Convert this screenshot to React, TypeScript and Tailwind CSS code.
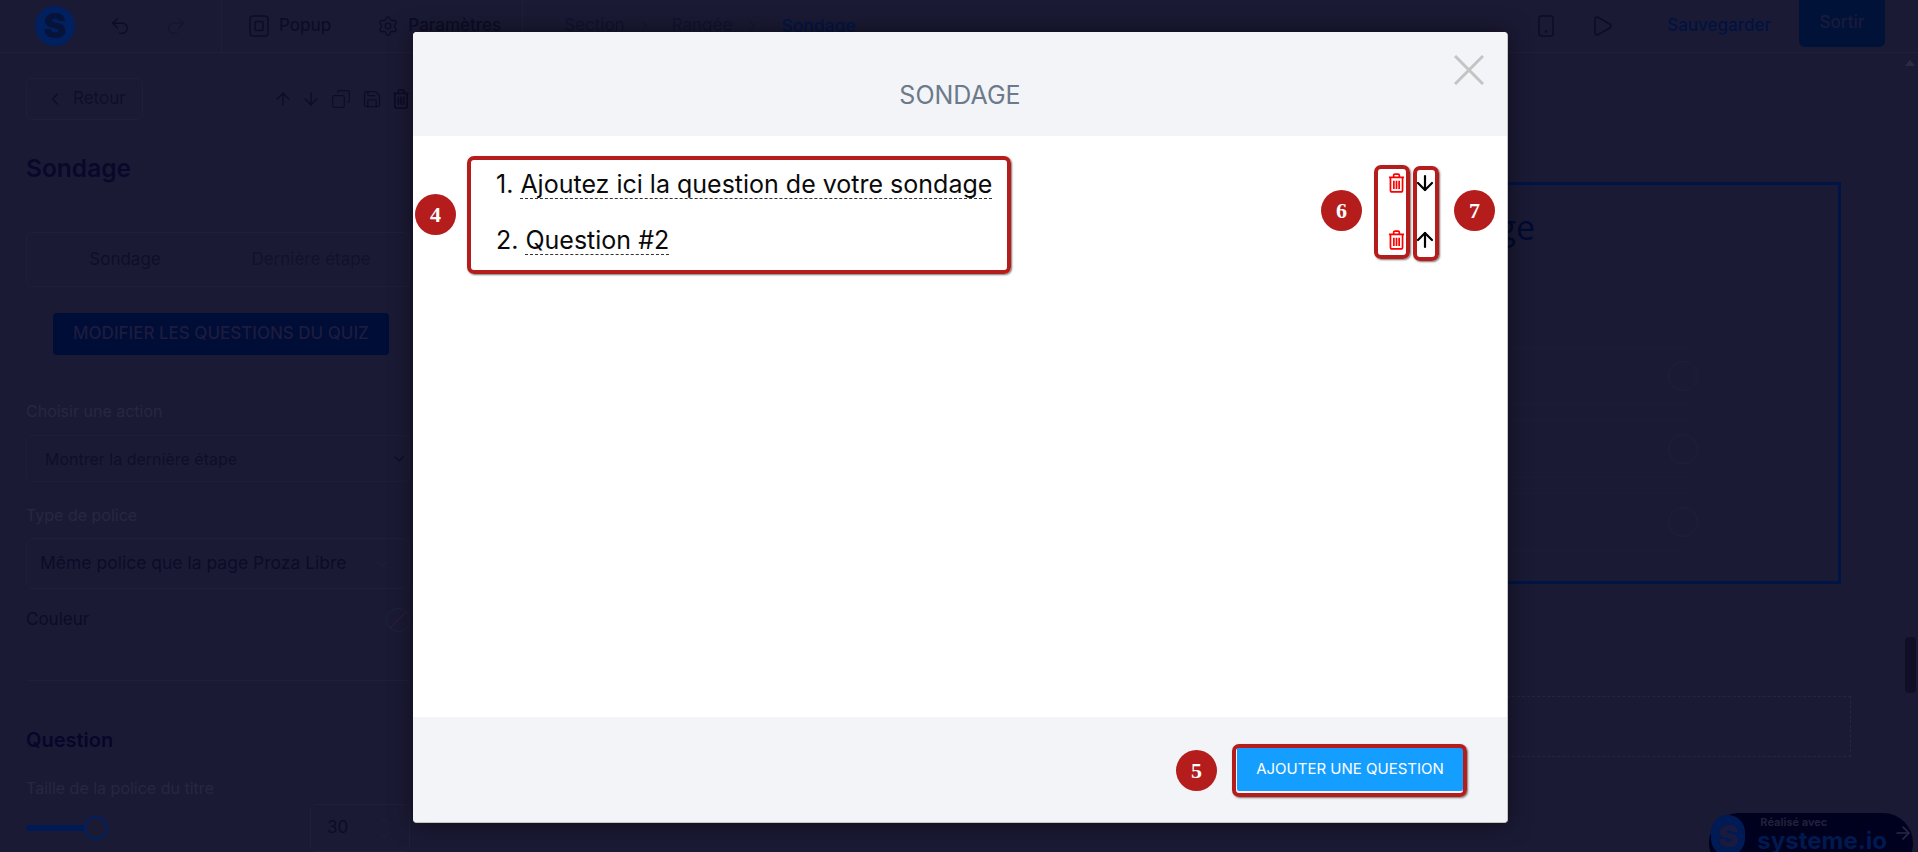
import { ArrowDown, ArrowUp, ChevronDown, ChevronLeft, ChevronRight, ChevronUp, Copy, Play, Save, Settings, Undo2, Redo2 } from "lucide-react";

function Trash({ className }: { className?: string }) {
  return (
    <svg viewBox="0 0 18 21" fill="none" stroke="currentColor" strokeWidth="1.8" className={className}>
      <path d="M1 4.5h16M6 4.2V2.4C6 1.6 6.6 1 7.4 1h3.2c.8 0 1.4.6 1.4 1.4v1.8" />
      <path d="M2.6 4.8v13.4c0 1 .8 1.8 1.8 1.8h9.2c1 0 1.8-.8 1.8-1.8V4.8" />
      <path d="M6.2 8v8.8M9 8v8.8M11.8 8v8.8" />
    </svg>
  );
}

function Marker({ n, className }: { n: number; className: string }) {
  return (
    <div className={`absolute flex h-[41px] w-[41px] items-center justify-center rounded-full bg-[#b51c1c] font-['Liberation_Serif',serif] text-[22px] font-bold text-white ${className}`}>
      {n}
    </div>
  );
}

function Question({ n, text }: { n: number; text: string }) {
  return (
    <div className="flex h-[32px] items-start gap-[7px] text-[25px] leading-[32px] text-[#0a0a0a]">
      <span>{n}.</span>
      <span className="h-[31px] border-b border-dashed border-[#333]">{text}</span>
    </div>
  );
}

function Bar() {
  return (
    <div className="flex h-[58px] w-[640px] items-center justify-end rounded-full border border-[#1d1c37] pr-[14px]">
      <div className="h-[30px] w-[30px] rounded-full border border-[#20203a]" />
    </div>
  );
}

export default function App() {
  return (
    <div className="relative flex h-screen w-full flex-col overflow-hidden bg-[#1b1a35] font-['Inter',sans-serif] text-[#0d0c28]">
      {/* Top bar */}
      <header className="flex h-[53px] shrink-0 items-center border-b border-[#201f3a] pl-[35px] pr-[33px]">
        <div className="flex h-[40px] w-[40px] items-center justify-center rounded-full bg-[#00205f] text-[34px] font-black leading-none text-[#071338]">S</div>
        <Undo2 className="ml-[34px] h-[22px] w-[22px]" strokeWidth={1.5} />
        <Redo2 className="ml-[34px] h-[22px] w-[22px] text-[#16152f]" strokeWidth={1.5} />
        <div className="ml-[34px] h-[52px] w-px bg-[#201f3a]" />
        <svg viewBox="0 0 20 22" fill="none" stroke="currentColor" strokeWidth="1.5" className="ml-[27px] h-[22px] w-[20px]">
          <rect x="1" y="1" width="18" height="20" rx="3" />
          <rect x="6" y="6.5" width="8" height="9" rx="1.5" />
        </svg>
        <span className="ml-[10px] text-[17px] font-medium">Popup</span>
        <Settings className="ml-[46px] h-[22px] w-[22px]" strokeWidth={1.5} />
        <span className="ml-[9px] text-[17px] font-medium">Paramètres</span>
        <div className="ml-[21px] h-[52px] w-px bg-[#201f3a]" />
        <span className="ml-[41px] text-[17px] text-[#131230]">Section</span>
        <ChevronRight className="ml-[9px] h-[20px] w-[20px] text-[#131230]" strokeWidth={1.2} />
        <span className="ml-[18px] text-[17px] text-[#131230]">Rangée</span>
        <ChevronRight className="ml-[10px] h-[20px] w-[20px] text-[#131230]" strokeWidth={1.2} />
        <span className="ml-[19px] text-[17.5px] font-medium text-[#001647]">Sondage</span>
        <div className="flex-1" />
        <svg viewBox="0 0 16 22" fill="none" stroke="currentColor" strokeWidth="1.5" className="h-[22px] w-[16px]">
          <rect x="1" y="1" width="14" height="20" rx="2.5" />
          <circle cx="8" cy="16.5" r="0.6" fill="currentColor" />
        </svg>
        <Play className="ml-[36px] h-[24px] w-[24px]" strokeWidth={1.5} />
        <span className="ml-[53px] text-[17px] font-medium text-[#001240]">Sauvegarder</span>
        <div className="ml-[28px] -mt-[6px] flex h-[47px] w-[86px] items-center justify-center rounded-b-[6px] bg-[#001238] text-[17px] font-medium text-[#1b1a3d]">Sortir</div>
      </header>

      <main className="flex min-h-0 flex-1">
        {/* Sidebar */}
        <aside className="w-[436px] shrink-0 px-[26px] pt-[25px]">
          <div className="flex h-[42px] items-center">
            <div className="flex h-[42px] w-[117px] items-center rounded-[6px] border border-[#201f3a] pl-[18px] text-[17px] text-[#0f0e2a]">
              <ChevronLeft className="mr-[8px] h-[20px] w-[20px]" strokeWidth={1.6} />
              Retour
            </div>
            <ArrowUp className="ml-[130px] h-[20px] w-[20px]" strokeWidth={1.6} />
            <ArrowDown className="ml-[8px] h-[20px] w-[20px]" strokeWidth={1.6} />
            <Copy className="ml-[10px] h-[20px] w-[20px] -scale-x-100" strokeWidth={1.4} />
            <Save className="ml-[11px] h-[20px] w-[20px]" strokeWidth={1.5} />
            <Trash className="ml-[10px] h-[20px] w-[18px]" />
          </div>
          <h1 className="mt-[32px] text-[24.5px] font-semibold leading-[32px] text-[#09082a]">Sondage</h1>
          <div className="mt-[48px] flex h-[55px] items-center rounded-[6px] border border-[#201f3a] text-[17px] text-[#0f0e2a]">
            <span className="w-[196px] text-center">Sondage</span>
            <span className="w-[176px] text-center text-[#12112d]">Dernière étape</span>
          </div>
          <div className="ml-[27px] mt-[26px] flex h-[42px] w-[336px] items-center justify-center rounded-[4px] bg-[#000d36] text-[17px] font-medium text-[#1d1c3f]">MODIFIER LES QUESTIONS DU QUIZ</div>
          <div className="mt-[46px] text-[16px] leading-[20px] text-[#28273f]">Choisir une action</div>
          <div className="mt-[14px] flex h-[47px] items-center justify-between rounded-[6px] border border-[#1f1e39] pl-[18px] pr-[2px] text-[16px] text-[#0f0e2a]">
            Montrer la dernière étape
            <ChevronDown className="h-[16px] w-[16px]" strokeWidth={2.4} />
          </div>
          <div className="mt-[23px] text-[16px] leading-[20px] text-[#28273f]">Type de police</div>
          <div className="mt-[13px] flex h-[51px] items-center justify-between rounded-[8px] border border-[#201f3a] pl-[13px] pr-[18px] text-[17.5px] text-[#0c0b28]">
            Même police que la page Proza Libre
            <ChevronDown className="h-[18px] w-[18px] text-[#23223d]" strokeWidth={1.4} />
          </div>
          <div className="mt-[19px] flex h-[24px] items-center justify-between text-[17px] text-[#0c0b28]">
            Couleur
            <svg viewBox="0 0 24 24" className="h-[24px] w-[24px]" fill="none">
              <circle cx="12" cy="12" r="11.5" stroke="#23223d" />
              <path d="M4 20 20 4" stroke="#3a1a3a" />
            </svg>
          </div>
          <div className="mt-[48px] h-px bg-[#201f3a]" />
          <h2 className="mt-[45px] text-[20px] font-semibold leading-[28px] text-[#07062a]">Question</h2>
          <div className="mt-[24px] text-[16px] leading-[20px] text-[#28273f]">Taille de la police du titre</div>
          <div className="mt-[6px] flex h-[48px] items-center">
            <div className="h-[6px] w-[58px] rounded-l-full bg-[#001a55]" />
            <div className="h-[24px] w-[24px] rounded-full border-2 border-[#00205f]" />
            <div className="flex-1" />
            <div className="flex h-[48px] w-[100px] items-center justify-between rounded-[6px] border border-[#201f3a] pl-[16px] pr-[18px] text-[17px] text-[#0c0b28]">
              30
              <div className="flex flex-col text-[#23223d]">
                <ChevronUp className="h-[14px] w-[14px]" strokeWidth={1.4} />
                <ChevronDown className="h-[14px] w-[14px]" strokeWidth={1.4} />
              </div>
            </div>
          </div>
        </aside>

        {/* Canvas */}
        <section className="min-w-0 flex-1 pl-[660px] pr-[67px] pt-[129px]">
          <div className="mr-[10px] flex h-[402px] flex-col items-end overflow-hidden border-[3px] border-[#001445] pr-[125px]">
            <div className="mt-[17px] h-[50px] whitespace-nowrap pr-[178px] font-['Open_Sans',sans-serif] text-[34px] leading-[50px] text-[#000a30]">ge</div>
            <div className="mt-[95px] flex flex-col gap-[15px]">
              <Bar />
              <Bar />
              <Bar />
            </div>
          </div>
          <div className="mt-[112px] h-[61px] border border-dashed border-[#26253f]" />
        </section>
      </main>

      {/* Page scrollbar */}
      <div className="absolute right-[3px] top-[60px] h-0 w-0 border-x-[5px] border-b-[6px] border-x-transparent border-b-[#2c2b45]" />
      <div className="absolute right-[2px] top-[637px] h-[56px] w-[11px] rounded-[4px] bg-[#100f26]" />

      {/* Badge */}
      <div className="absolute left-[1709px] top-[813px] flex h-[60px] w-[204px] rounded-[30px] bg-[#00001f] pl-[2px] pt-[2px]">
        <div className="flex h-[41px] w-[41px] items-center justify-center rounded-full bg-[#001a55] text-[30px] font-black leading-none text-[#1b1a3d]">S</div>
        <div className="ml-[12px] font-bold">
          <div className="pl-[3px] text-[11px] leading-[14px] text-[#22213b]">Réalisé avec</div>
          <div className="text-[24px] leading-[24px] text-[#001a50]">systeme.io</div>
        </div>
        <ArrowUp className="ml-[6px] mt-[6px] h-[24px] w-[24px] rotate-90 text-[#2a2844]" strokeWidth={2} />
      </div>

      {/* Modal */}
      <div className="absolute left-[413px] top-[32px] flex h-[791px] w-[1095px] flex-col rounded-[4px] border-b border-r border-[#c4c4c4] bg-white shadow-[0_0_22px_rgba(0,0,0,0.55)]">
        <div className="relative flex h-[104px] shrink-0 items-center justify-center rounded-t-[4px] bg-[#f2f4f8] pt-[24px] text-[25px] text-[#6c7a89]">
          SONDAGE
          <svg viewBox="0 0 30 30" className="absolute right-[23px] top-[23px] h-[30px] w-[30px]" stroke="#c4c4c4" strokeWidth="3">
            <path d="M1 1 29 29M29 1 1 29" />
          </svg>
        </div>

        <div className="flex flex-1 justify-between pl-[83px] pr-[70px] pt-[32px]">
          <div className="flex flex-col gap-[24px]">
            <Question n={1} text="Ajoutez ici la question de votre sondage" />
            <Question n={2} text="Question #2" />
          </div>
          <div className="flex flex-col gap-[33px] pt-[3px]">
            <div className="flex h-[24px] items-center gap-[8px]">
              <Trash className="h-[20px] w-[17px] text-[#ff0000]" />
              <ArrowDown className="h-[24px] w-[24px] text-black" strokeWidth={2.2} />
            </div>
            <div className="flex h-[24px] items-center gap-[8px]">
              <Trash className="h-[20px] w-[17px] text-[#ff0000]" />
              <ArrowUp className="h-[24px] w-[24px] text-black" strokeWidth={2.2} />
            </div>
          </div>
        </div>

        <div className="flex h-[105px] shrink-0 items-center justify-end rounded-b-[4px] bg-[#f2f4f8] pb-[1px] pr-[44px]">
          <button className="flex h-[44px] w-[226px] items-center justify-center rounded-[2px] bg-[#149eff] text-[15px] text-white">AJOUTER UNE QUESTION</button>
        </div>

        {/* Annotations */}
        <div className="absolute left-[54px] top-[124px] h-[118px] w-[544px] rounded-[7px] border-4 border-[#b51c1c] shadow-[1px_1px_2px_#777]" />
        <div className="absolute left-[961px] top-[133px] h-[94px] w-[36px] rounded-[7px] border-4 border-[#b51c1c] shadow-[1px_1px_2px_#777]" />
        <div className="absolute left-[1000px] top-[134px] h-[95px] w-[26px] rounded-[7px] border-4 border-[#b51c1c] shadow-[1px_1px_2px_#777]" />
        <div className="absolute left-[819px] top-[712px] h-[53px] w-[235px] rounded-[7px] border-4 border-[#b51c1c] shadow-[1px_1px_2px_#777]" />
        <Marker n={4} className="left-[2px] top-[162px]" />
        <Marker n={6} className="left-[908px] top-[158px]" />
        <Marker n={7} className="left-[1041px] top-[158px]" />
        <Marker n={5} className="left-[763px] top-[718px]" />
      </div>
    </div>
  );
}
